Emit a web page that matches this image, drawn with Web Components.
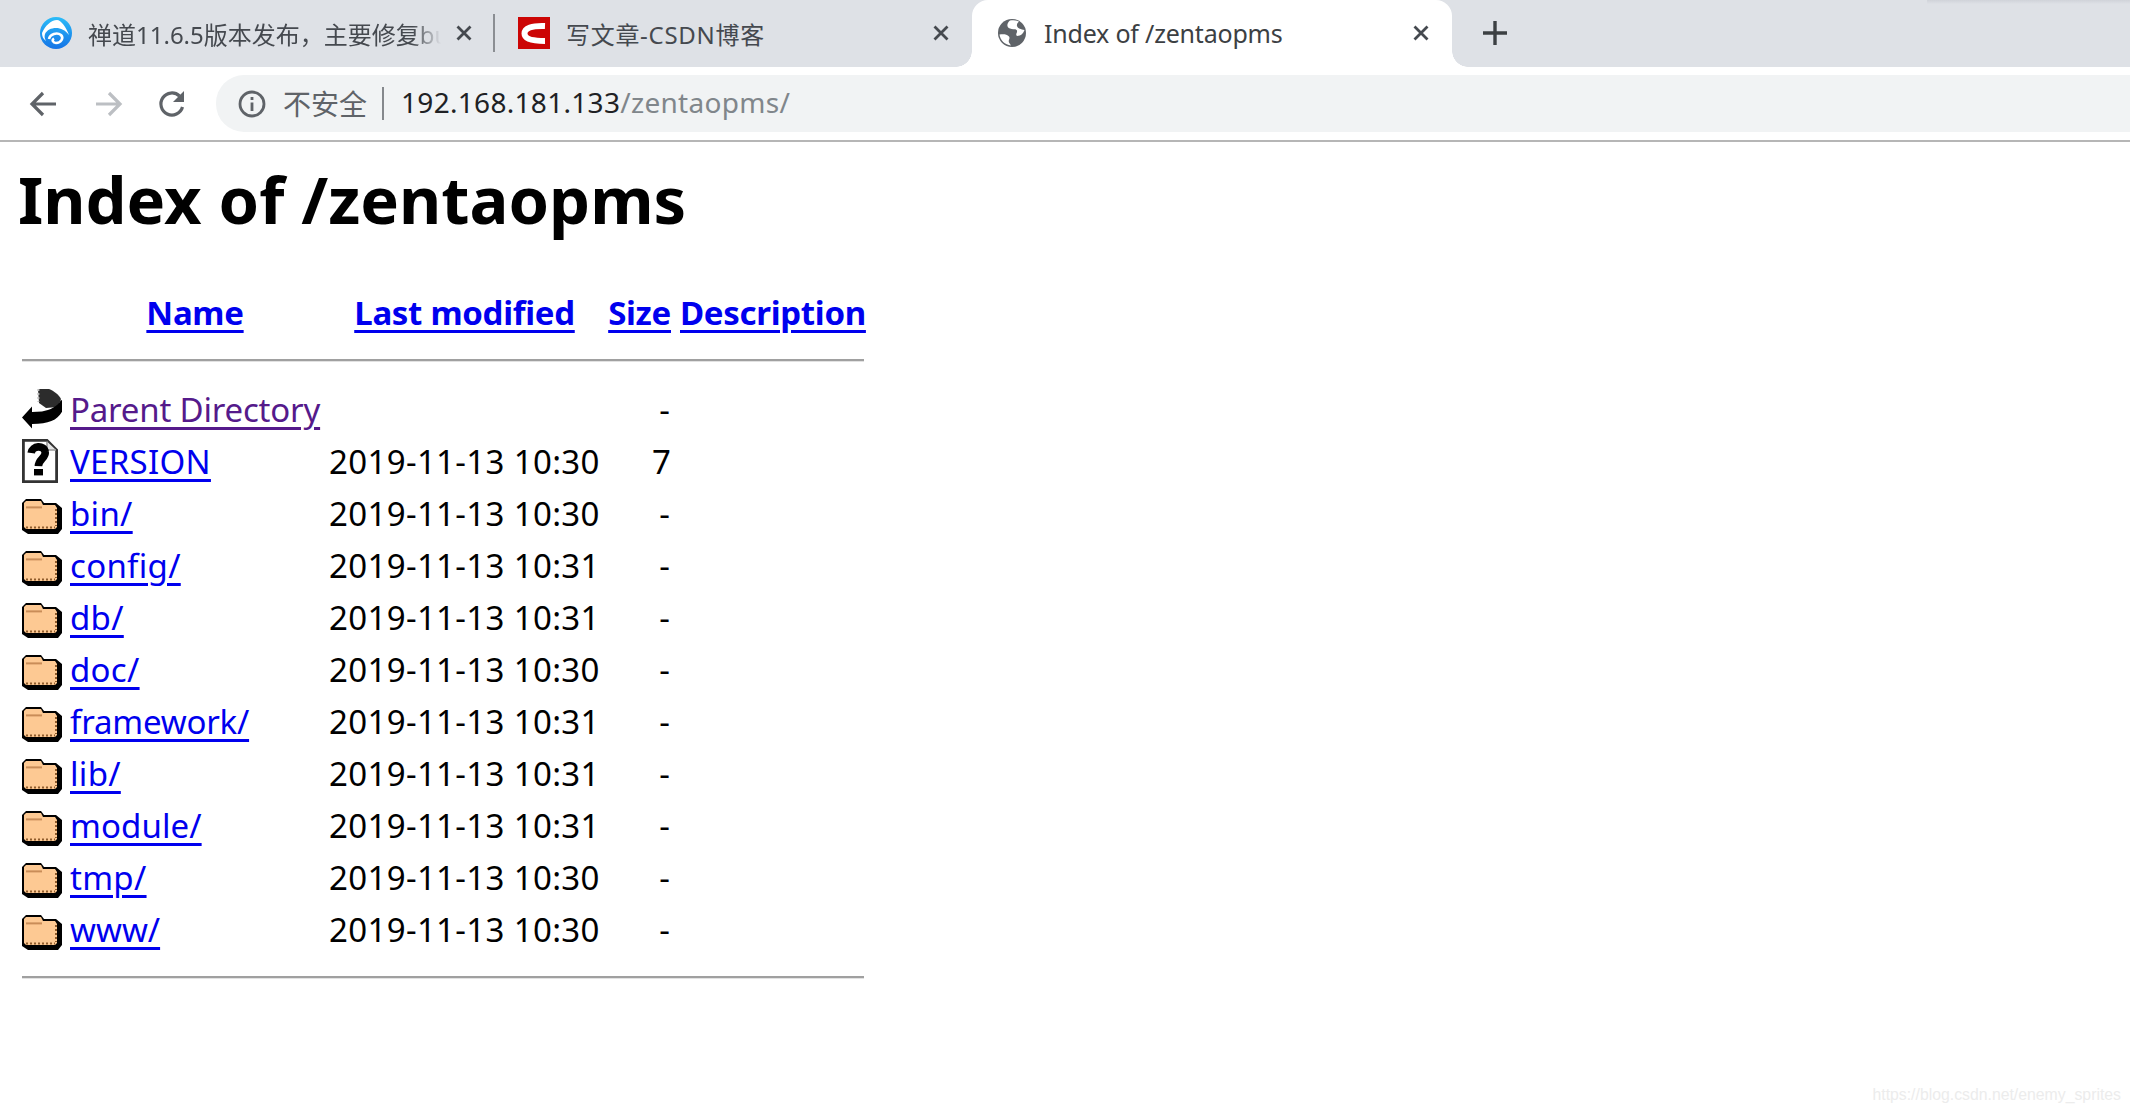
<!DOCTYPE html>
<html lang="zh">
<head>
<meta charset="utf-8">
<title>Index of /zentaopms</title>
<style>
  html, body { margin: 0; height: 100%; background: #fff; overflow: hidden; }
  body { font-family: "Noto Sans", "Noto Sans CJK SC", sans-serif; }
</style>
</head>
<body>
<browser-frame>
  <tab-strip>
    <browser-tab width="495" fade style="padding-left:40px;font-size:24px">
      <svg slot="icon" width="32" height="32" viewBox="0 0 32 32">
        <defs><linearGradient id="g" x1="0" y1="0" x2="0" y2="1"><stop offset="0" stop-color="#2bbcf8"/><stop offset="1" stop-color="#1473e6"/></linearGradient></defs>
        <circle cx="16" cy="16" r="16" fill="url(#g)"/>
        <path d="M2 16C5 9 11 3 17 3C21 3 26 10 29 18C25 13 21 11 16 11C11 11 7 13 5 17C4 20 5 22 6 24C3 22 2 19 2 16Z" fill="#fff"/>
        <path d="M9 22C10 17 17 15 21 18C24 21 21 26 16 26C13 26 11.5 23 14 21.5" fill="none" stroke="#fff" stroke-width="2.6"/>
      </svg>
      禅道11.6.5版本发布，主要修复bug
    </browser-tab>
    <tab-separator></tab-separator>
    <browser-tab width="477" style="padding-left:23px;font-size:24px;letter-spacing:.7px">
      <svg slot="icon" width="32" height="32" viewBox="0 0 32 32">
        <rect width="32" height="32" fill="#cc0505"/>
        <path d="M27 9C14 8.5 6.5 11 6.5 16.5C6.5 22 14 24 27 24" fill="none" stroke="#fff" stroke-width="6"/>
      </svg>
      写文章-CSDN博客
    </browser-tab>
    <browser-tab width="480" active>
      <svg slot="icon" width="28" height="28" viewBox="0 0 28 28">
        <circle cx="14" cy="14" r="14" fill="#5f6368"/>
        <path d="M12 1.5C9 4 8 8 12 9.5C15 11 18 9 19 11.5C19.5 14 17 15 19 17C23 17 25.5 14 26.5 11C23 10 20 10 19 7C18.5 5 20 3.5 21 2.5C18 1 15 1 12 1.5ZM1.5 15.5C5 15 9 15 11 17.5C12.5 20 10 21 11 23.5L13 26.5C7 26 2 21 1.5 15.5Z" fill="#fff"/>
      </svg>
      Index of /zentaopms
    </browser-tab>
    <new-tab-button></new-tab-button>
  </tab-strip>
  <nav-toolbar>
    <span slot="status">不安全</span>
    <span slot="host">192.168.181.133</span><span slot="path">/zentaopms/</span>
  </nav-toolbar>
</browser-frame>
<index-page heading="Index of /zentaopms">
  <index-row kind="back" visited size="-" style="--name-tracking:-0.2px">Parent Directory</index-row>
  <index-row kind="unknown" date="2019-11-13 10:30" size="7" style="--name-tracking:0.3px;--size-inset:0">VERSION</index-row>
  <index-row kind="folder" date="2019-11-13 10:30" size="-">bin/</index-row>
  <index-row kind="folder" date="2019-11-13 10:31" size="-">config/</index-row>
  <index-row kind="folder" date="2019-11-13 10:31" size="-">db/</index-row>
  <index-row kind="folder" date="2019-11-13 10:30" size="-">doc/</index-row>
  <index-row kind="folder" date="2019-11-13 10:31" size="-" style="--name-tracking:-0.2px">framework/</index-row>
  <index-row kind="folder" date="2019-11-13 10:31" size="-">lib/</index-row>
  <index-row kind="folder" date="2019-11-13 10:31" size="-" style="--name-tracking:0.1px">module/</index-row>
  <index-row kind="folder" date="2019-11-13 10:30" size="-">tmp/</index-row>
  <index-row kind="folder" date="2019-11-13 10:30" size="-" style="--name-tracking:0">www/</index-row>
</index-page>
<water-mark>https://blog.csdn.net/enemy_sprites</water-mark>

<script>
const CLOSE_ICON = `<svg width="18" height="18" viewBox="0 0 18 18"><path d="M2.5 2.5L15.5 15.5M15.5 2.5L2.5 15.5" stroke="currentColor" stroke-width="2.8" fill="none"/></svg>`;

// BrowserFrame.js;
customElements.define(
  "browser-frame",
  class BrowserFrame extends HTMLElement {
    constructor() {
      super();
      this.attachShadow({ mode: "open" }).innerHTML = `
      <style>
        :host { display: block; border-bottom: 2px solid #b6b6b6; background: #fff; }
      </style>
      <slot></slot>
      `;
    }
  }
);

// TabStrip.js;
customElements.define(
  "tab-strip",
  class TabStrip extends HTMLElement {
    constructor() {
      super();
      this.attachShadow({ mode: "open" }).innerHTML = `
      <style>
        :host {
          display: flex;
          align-items: flex-start;
          height: 67px;
          background: #dee1e6;
          position: relative;
        }
        .edge {
          position: absolute;
          top: 0; right: 0;
          width: 203px; height: 4px;
          background: linear-gradient(#d0d3d9, #dee1e6);
        }
      </style>
      <slot></slot>
      <div class="edge"></div>
      `;
    }
  }
);

// BrowserTab.js;
customElements.define(
  "browser-tab",
  class BrowserTab extends HTMLElement {
    constructor() {
      super();
      this.attachShadow({ mode: "open" }).innerHTML = `
      <style>
        :host {
          display: flex;
          align-items: center;
          box-sizing: border-box;
          flex: none;
          height: 66px;
          font-size: 25px;
          color: #45494f;
          padding-right: 22px;
          white-space: nowrap;
        }
        :host([active]) {
          background: #fff;
          color: #3c4043;
          border-radius: 16px 16px 0 0;
          padding-left: 26px;
          padding-bottom: 8px;
          height: 74px;
          position: relative;
          letter-spacing: -0.2px;
        }
        :host([active])::before, :host([active])::after {
          content: "";
          position: absolute;
          bottom: 7px;
          width: 16px; height: 16px;
        }
        :host([active])::before { left: -16px; background: radial-gradient(circle at 0 0, transparent 15.5px, #fff 16px); }
        :host([active])::after { right: -16px; background: radial-gradient(circle at 100% 0, transparent 15.5px, #fff 16px); }
        .icon { display: flex; flex: none; margin-right: 16px; }
        :host([active]) .icon { margin-right: 18px; }
        .title { flex: 1; min-width: 0; overflow: hidden; }
        :host([fade]) .title { -webkit-mask-image: linear-gradient(90deg, #000 92%, transparent 100%); mask-image: linear-gradient(90deg, #000 92%, transparent 100%); }
        .close { display: flex; flex: none; margin-left: 14px; color: #45494f; }
      </style>
      <span class="icon"><slot name="icon"></slot></span>
      <span class="title"><slot></slot></span>
      <span class="close">${CLOSE_ICON}</span>
      `;
    }
    connectedCallback() {
      this.style.width = this.getAttribute("width") + "px";
    }
  }
);

// TabSeparator.js;
customElements.define(
  "tab-separator",
  class TabSeparator extends HTMLElement {
    constructor() {
      super();
      this.attachShadow({ mode: "open" }).innerHTML = `
      <style>
        :host { display: block; flex: none; width: 2px; height: 38px; margin: 14px 0 0 -2px; background: #8b8e93; }
      </style>
      `;
    }
  }
);

// NewTabButton.js;
customElements.define(
  "new-tab-button",
  class NewTabButton extends HTMLElement {
    constructor() {
      super();
      this.attachShadow({ mode: "open" }).innerHTML = `
      <style>
        :host { display: flex; align-items: center; height: 66px; margin-left: 31px; padding-bottom: 1px; box-sizing: border-box; }
        svg { display: block; }
      </style>
      <svg width="24" height="24" viewBox="0 0 24 24"><path d="M12 0V24M0 12H24" stroke="#3c4043" stroke-width="3.4" fill="none"/></svg>
      `;
    }
  }
);

// NavToolbar.js;
customElements.define(
  "nav-toolbar",
  class NavToolbar extends HTMLElement {
    constructor() {
      super();
      this.attachShadow({ mode: "open" }).innerHTML = `
      <style>
        :host {
          display: flex;
          align-items: center;
          height: 73px;
          padding-left: 29px;
          box-sizing: border-box;
          background: #fff;
          position: relative;
        }
        .nav { display: flex; flex: none; width: 64px; }
        .nav svg { display: block; }
        .omnibox {
          flex: 1;
          height: 57px;
          margin-left: -5px;
          box-sizing: border-box;
          display: flex;
          align-items: center;
          position: relative;
          background: #f1f3f4;
          border-radius: 28px 0 0 28px;
          font-size: 28px;
          white-space: nowrap;
        }
        .lead { position: absolute; left: 22px; }
        .status { position: absolute; left: 67px; color: #5f6368; top: 8px; }
        .rule { position: absolute; left: 166px; top: 12px; width: 2px; height: 33px; background: #85888c; }
        .url { position: absolute; left: 185px; color: #202124; top: 8px; letter-spacing: 0.3px; }
        .path { color: #80868b; }
      </style>
      <span class="nav"><svg width="30" height="30" viewBox="0 0 30 30"><path d="M27 15H4M14 4L3 15L14 26" stroke="#5f6368" stroke-width="3.2" fill="none"/></svg></span>
      <span class="nav"><svg width="30" height="30" viewBox="0 0 30 30"><path d="M3 15H26M16 4L27 15L16 26" stroke="#bcbfc3" stroke-width="3.2" fill="none"/></svg></span>
      <span class="nav"><svg width="30" height="30" viewBox="0 0 30 30"><path d="M25.5 18A11 11 0 1 1 22.5 7" stroke="#5f6368" stroke-width="3.2" fill="none"/><path d="M27 2V13H16Z" fill="#5f6368"/></svg></span>
      <div class="omnibox">
        <svg class="lead" width="28" height="28" viewBox="0 0 28 28"><circle cx="14" cy="14" r="12" fill="none" stroke="#5f6368" stroke-width="2.8"/><path d="M12.6 12.5H15.4V21H12.6ZM12.6 7H15.4V10H12.6Z" fill="#5f6368"/></svg>
        <span class="status"><slot name="status"></slot></span>
        <span class="rule"></span>
        <span class="url"><slot name="host"></slot><span class="path"><slot name="path"></slot></span></span>
      </div>
      `;
    }
  }
);

// IndexPage.js;
customElements.define(
  "index-page",
  class IndexPage extends HTMLElement {
    constructor() {
      super();
      this.attachShadow({ mode: "open" }).innerHTML = `
      <style>
        :host { display: block; padding: 0 0 0 17px; color: #000; }
        h1 { margin: 14px 0 0 1px; font-size: 65px; line-height: 87px; font-weight: 700; }
        .table { margin: 43px 0 0 5px; width: 842px; }
        .head {
          display: grid;
          grid-template-columns: 48px 250px 279px 72px 193px;
          align-items: center;
          height: 52px;
          font-size: 33px;
          font-weight: 700;
          text-align: center;
          letter-spacing: -0.3px;
        }
        .head a { color: #0000ee; text-underline-offset: 5px; text-decoration-thickness: 3px; }
        .head .modified { padding-left: 10px; }
        .head .size { text-align: right; }
        .head .desc { text-align: left; padding-left: 9px; white-space: nowrap; }
        hr { margin: 0; border: 0; height: 2px; background: #a0a0a0; box-shadow: 0 1px 0 #e2e2e2; }
        .top { margin: 21px 0 22px; }
        .bottom { margin-top: 21px; }
      </style>
      <h1></h1>
      <div class="table">
        <div class="head">
          <span></span>
          <span><a href="#">Name</a></span>
          <span class="modified"><a href="#">Last modified</a></span>
          <span class="size"><a href="#">Size</a></span>
          <span class="desc"><a href="#">Description</a></span>
        </div>
        <hr class="top">
        <slot></slot>
        <hr class="bottom">
      </div>
      `;
    }
    connectedCallback() {
      this.shadowRoot.querySelector("h1").textContent = this.getAttribute("heading");
    }
  }
);

const ROW_ICONS = {
  back: `<path d="M8 1H13.5C16 2 18.5 4 19.5 6L18 10L12 10.5L8.5 8Z" fill="#2c2c2c"/>
    <path d="M8.2 1V7.5" stroke="#bbb" stroke-width="1" stroke-dasharray="1 1" fill="none"/>
    <path d="M0 15.2L5 9.8V12.5L10 12.2C14 11.7 18 9.5 19.5 6.5L20.5 7V11.5C18 16.5 14 18.5 5 18.5V20.8Z" fill="#000"/>`,
  unknown: `<path d="M.7.7H12.5L17.3 5.5V21.3H.7Z" fill="#fff" stroke="#333" stroke-width="1.4"/>
    <path d="M12.5 1.2V5.5H17" fill="#e4e4e4" stroke="#999" stroke-width=".8"/>
    <path d="M4.6 7C5 3.2 11.2 2.8 11.6 6.5C12 9.5 8.3 10 8.2 13.6" fill="none" stroke="#000" stroke-width="3.8"/>
    <path d="M6 15H10.5V18.2H6Z" fill="#000"/>`,
  folder: `<path d="M2 4H9.5L11 6H17L20 8.5V19L18 21.5H3L0 19.5V6Z" fill="#000"/>
    <path d="M2 5H9.5L10.5 7H16.5L17.5 8.5V18L16.5 19H2L1 18V6Z" fill="#fdc993"/>
    <path d="M2 8.2H10" stroke="#c98d58" stroke-width="1" fill="none"/>
    <path d="M2 18.2H16.5M17 9V17.5" stroke="#8f5c2c" stroke-width="1" stroke-dasharray="1 1" fill="none"/>`
};

// IndexRow.js;
customElements.define(
  "index-row",
  class IndexRow extends HTMLElement {
    constructor() {
      super();
      this.attachShadow({ mode: "open" }).innerHTML = `
      <style>
        :host {
          display: grid;
          grid-template-columns: 48px 259px 270px 72px;
          align-items: center;
          height: 52px;
          font-size: 33px;
          white-space: nowrap;
        }
        svg { display: block; filter: blur(0.4px); }
        a { color: #0000ee; text-underline-offset: 5px; text-decoration-thickness: 2.5px; letter-spacing: var(--name-tracking, 0.3px); }
        a.visited { color: #551a8b; }
        .date { letter-spacing: 0.35px; }
        .size { text-align: right; padding-right: var(--size-inset, 1px); }
      </style>
      <svg width="40" height="44" viewBox="0 0 20 22"></svg>
      <span><a href="#"><slot></slot></a></span>
      <span class="date"></span>
      <span class="size"></span>
      `;
    }
    connectedCallback() {
      const root = this.shadowRoot;
      root.querySelector("svg").innerHTML = ROW_ICONS[this.getAttribute("kind")];
      root.querySelector(".date").textContent = this.getAttribute("date") ?? "";
      root.querySelector(".size").textContent = this.getAttribute("size");
      if (this.hasAttribute("visited")) {
        root.querySelector("a").classList.add("visited");
      }
    }
  }
);

// WaterMark.js;
customElements.define(
  "water-mark",
  class WaterMark extends HTMLElement {
    constructor() {
      super();
      this.attachShadow({ mode: "open" }).innerHTML = `
      <style>
        :host {
          position: absolute;
          right: 9px; bottom: 9px;
          font: 15.8px "Liberation Sans", sans-serif;
          color: #ececec;
        }
      </style>
      <slot></slot>
      `;
    }
  }
);
</script>
</body>
</html>
